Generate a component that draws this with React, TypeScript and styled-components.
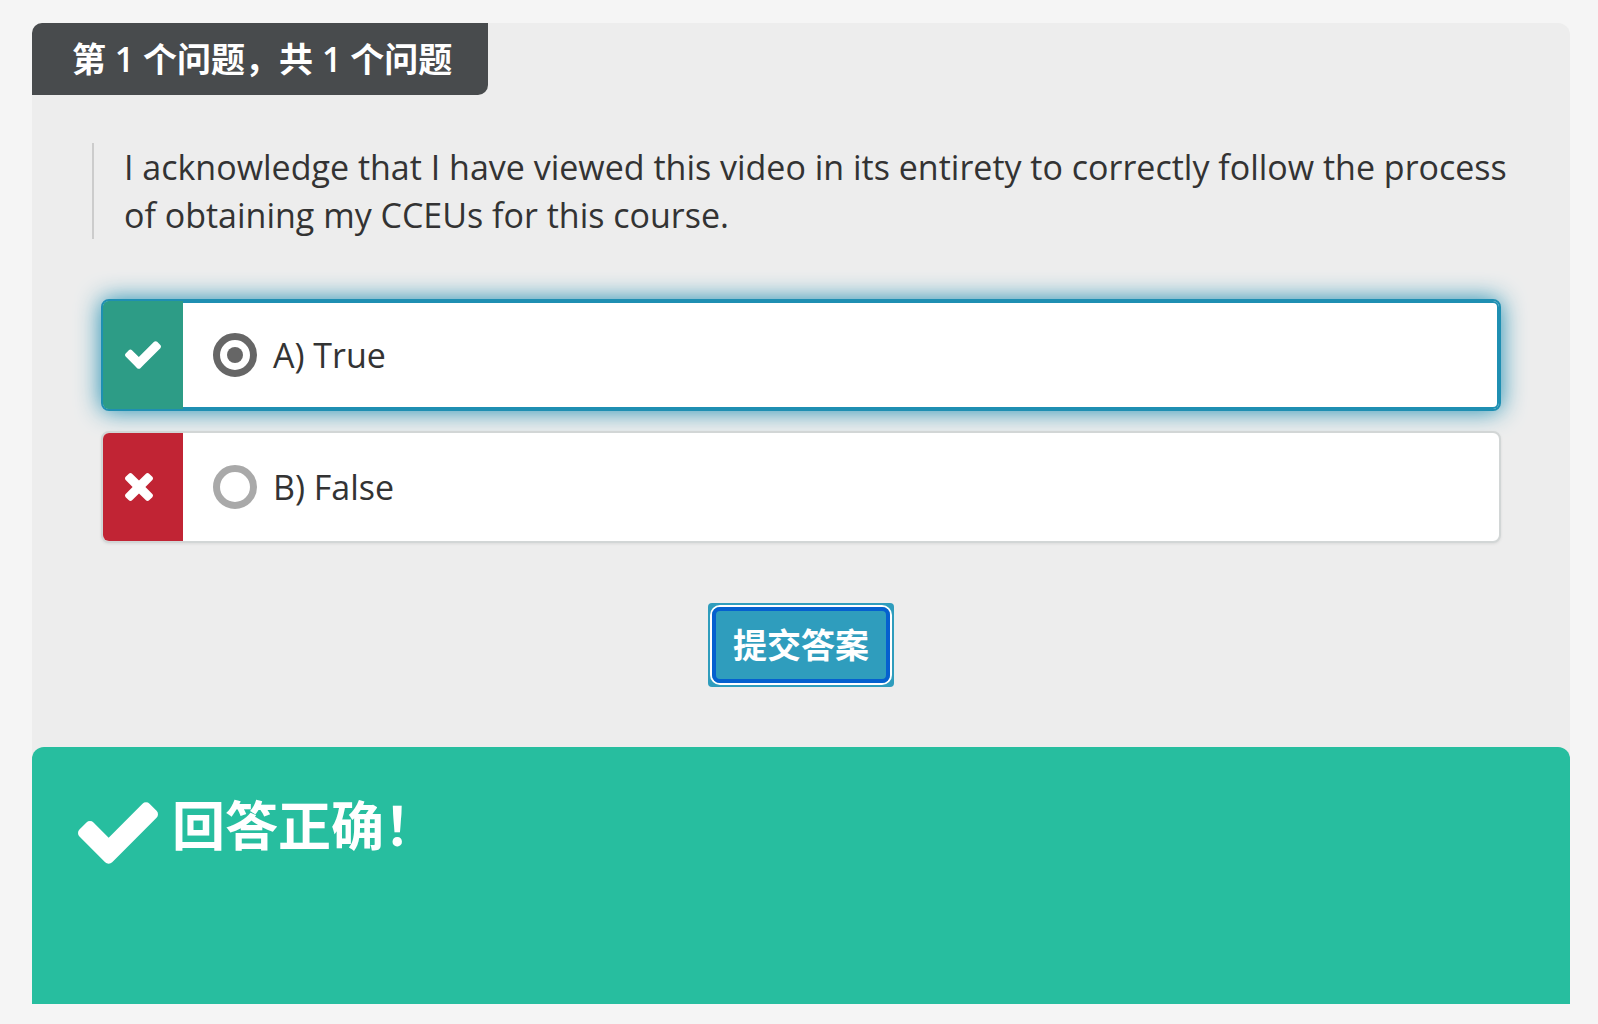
import React, { useState } from "react";
import styled, { createGlobalStyle } from "styled-components";

const GlobalStyle = createGlobalStyle`
  *, *::before, *::after { box-sizing: border-box; }
  body {
    margin: 0;
    background: #f5f5f5;
    color: #333333;
    font-family: "Open Sans", "Noto Sans CJK SC", sans-serif;
    font-size: 34px;
    line-height: 48px;
  }
`;

const Page = styled.main`
  padding: 23px 28px 20px 32px;
`;

const Card = styled.section`
  display: flex;
  flex-direction: column;
  background: #ededed;
  border-radius: 12px 12px 0 0;
`;

const Progress = styled.h2`
  align-self: flex-start;
  margin: 0;
  padding: 12px 36px 12px 40px;
  background: #484b4d;
  color: #ffffff;
  border-radius: 10px 0 10px 0;
  font-size: 34px;
  font-weight: 600;
`;

const Form = styled.form`
  display: flex;
  flex-direction: column;
  gap: 60px;
  padding: 48px 60px 60px;
`;

const Question = styled.blockquote`
  margin: 0;
  padding-left: 30px;
  border-left: 2px solid #cccccc;
`;

const Answers = styled.div`
  display: flex;
  flex-direction: column;
  gap: 20px;
  padding: 0 9px;
`;

const Answer = styled.label<{ $selected: boolean }>`
  display: flex;
  min-height: 112px;
  background: #ffffff;
  border: 2px solid ${(p) => (p.$selected ? "#1f8fb2" : "#d2d6d6")};
  border-radius: 8px;
  box-shadow: ${(p) =>
    p.$selected
      ? "inset 0 0 0 2px #1f8fb2, 0 0 24px #1f8fb2"
      : "0 1px 3px rgba(0, 0, 0, 0.08)"};
  cursor: pointer;
`;

const Mark = styled.span<{ $correct: boolean }>`
  display: flex;
  align-items: center;
  width: 80px;
  padding-left: 22px;
  background: ${(p) => (p.$correct ? "#2d9c86" : "#c12434")};
  color: #ffffff;
  border-radius: 6px 0 0 6px;
`;

const Choice = styled.span`
  display: flex;
  flex: 1;
  align-items: center;
  gap: 16px;
  padding-left: 30px;
`;

const Radio = styled.input`
  appearance: none;
  display: grid;
  place-items: center;
  width: 44px;
  height: 44px;
  margin: 0;
  border: 7px solid #a9a9a9;
  border-radius: 50%;
  background: #ffffff;
  outline: none;

  &:checked { border-color: #666666; }
  &:checked::before {
    content: "";
    width: 16px;
    height: 16px;
    border-radius: 50%;
    background: #666666;
  }
`;

const Submit = styled.button`
  align-self: center;
  padding: 18px 25px;
  border: 0;
  border-radius: 4px;
  background: #2f9dbd;
  color: #ffffff;
  font: inherit;
  font-weight: 700;
  position: relative;
  cursor: pointer;

  &::after {
    content: "";
    position: absolute;
    inset: 4px;
    border: 4px solid #0560cf;
    border-radius: 8px;
    box-shadow: 0 0 0 2px #ffffff;
  }
`;

const Feedback = styled.div`
  display: flex;
  align-items: flex-start;
  gap: 14px;
  padding: 40px 46px 139px;
  background: #27be9f;
  color: #ffffff;
  border-radius: 12px 12px 0 0;
`;

const FeedbackIcon = styled.span`
  display: flex;
  padding-top: 15px;
`;

const FeedbackTitle = styled.h3`
  margin: 0;
  font-size: 53px;
  font-weight: 700;
  line-height: 78px;
`;

function CheckIcon({ width, height }: { width: number; height: number }) {
  return (
    <svg width={width} height={height} viewBox="121 334 1550 1188" fill="currentColor" aria-hidden="true">
      <path d="M1671 566q0 40-28 68l-724 724-136 136q-28 28-68 28t-68-28l-136-136-362-362q-28-28-28-68t28-68l136-136q28-28 68-28t68 28l294 295 656-657q28-28 68-28t68 28l136 136q28 28 28 68z" />
    </svg>
  );
}

function CrossIcon() {
  return (
    <svg width={28} height={28} viewBox="302 366 1188 1188" fill="currentColor" aria-hidden="true">
      <path d="M1490 1322q0 40-28 68l-136 136q-28 28-68 28t-68-28l-294-294-294 294q-28 28-68 28t-68-28l-136-136q-28-28-28-68t28-68l294-294-294-294q-28-28-28-68t28-68l136-136q28-28 68-28t68 28l294 294 294-294q28-28 68-28t68 28l136 136q28 28 28 68t-28 68l-294 294 294 294q28 28 28 68z" />
    </svg>
  );
}

const options = [
  { id: "a", text: "A) True", correct: true },
  { id: "b", text: "B) False", correct: false },
];

export default function App() {
  const [selected, setSelected] = useState("a");

  return (
    <Page lang="zh-CN">
      <GlobalStyle />
      <Card>
        <Progress>第 1 个问题，共 1 个问题</Progress>
        <Form onSubmit={(e) => e.preventDefault()}>
          <Question lang="en">
            I acknowledge that I have viewed this video in its entirety to correctly follow the process of
            obtaining my CCEUs for this course.
          </Question>
          <Answers role="radiogroup">
            {options.map((o) => (
              <Answer key={o.id} htmlFor={o.id} $selected={selected === o.id}>
                <Mark $correct={o.correct}>
                  {o.correct ? <CheckIcon width={36} height={28} /> : <CrossIcon />}
                </Mark>
                <Choice>
                  <Radio
                    type="radio"
                    name="answer"
                    id={o.id}
                    checked={selected === o.id}
                    onChange={() => setSelected(o.id)}
                  />
                  {o.text}
                </Choice>
              </Answer>
            ))}
          </Answers>
          <Submit type="submit">提交答案</Submit>
        </Form>
        <Feedback role="status">
          <FeedbackIcon>
            <CheckIcon width={80} height={62} />
          </FeedbackIcon>
          <FeedbackTitle>回答正确！</FeedbackTitle>
        </Feedback>
      </Card>
    </Page>
  );
}
